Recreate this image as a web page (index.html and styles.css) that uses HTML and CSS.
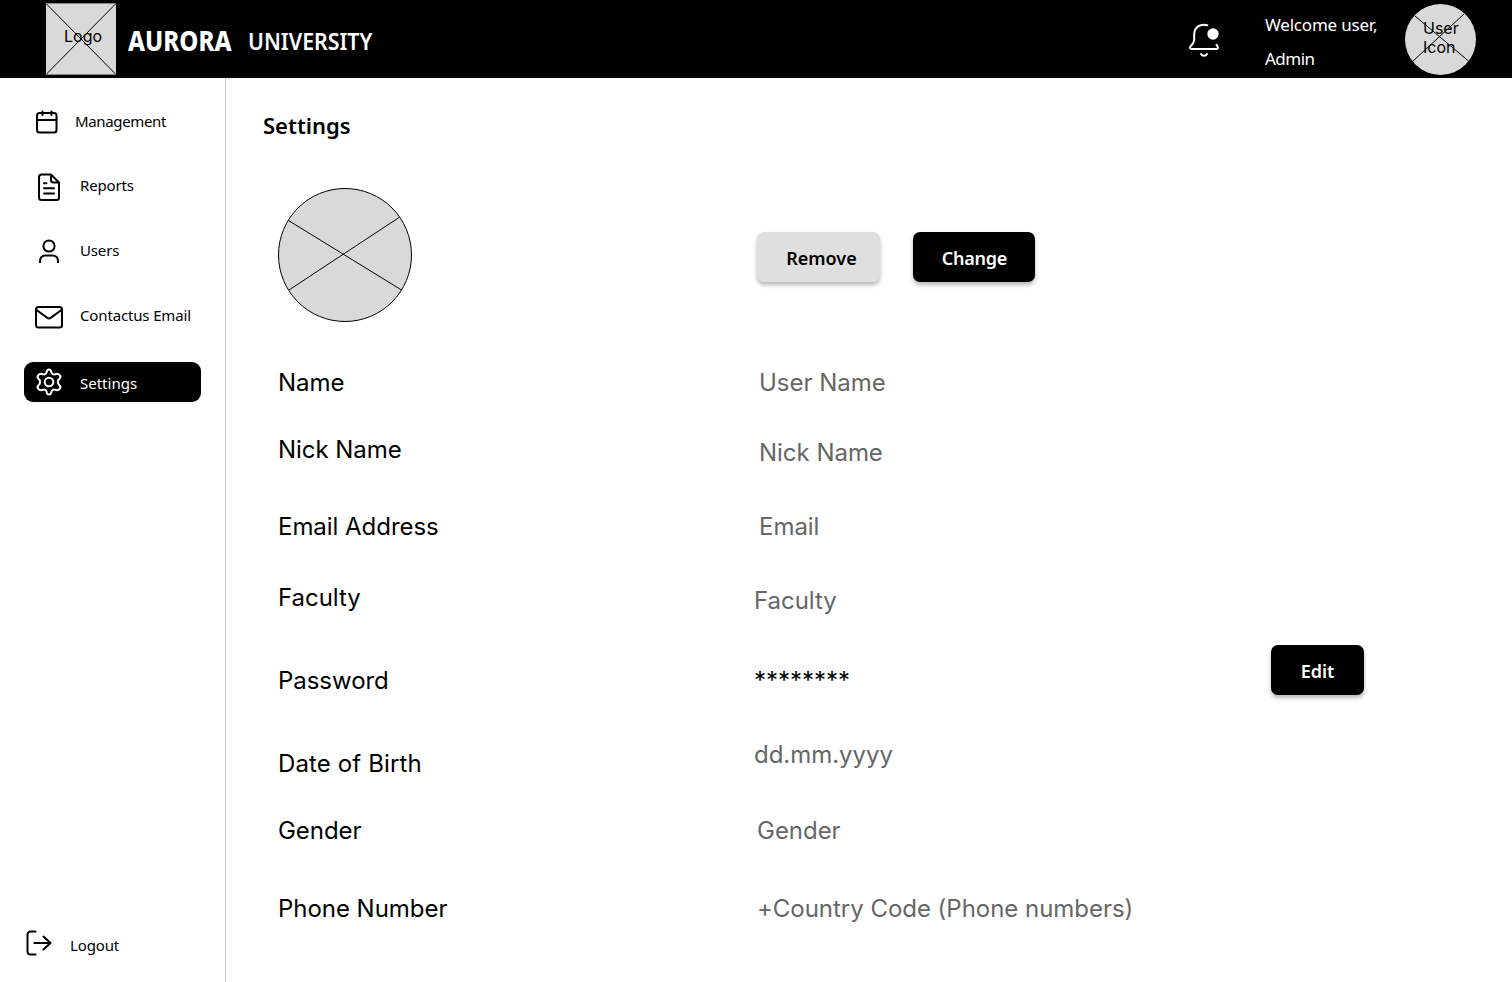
FILE: index.html
```html
<!DOCTYPE html>
<html lang="en">
<head>
<meta charset="utf-8">
<title>Aurora University – Settings</title>
<link rel="stylesheet" href="styles.css">
</head>
<body>
<header class="topbar">
  <div class="logo">
    <svg class="cross" viewBox="0 0 70 72"><rect width="70" height="72" fill="#d9d9d9" stroke="none"/><path d="M0 .5H70M0 71.500H70" stroke="#888"/><path d="M.5 1 69.500 71M69.500 1 .5 71"/></svg>
    <span class="logo-text">Logo</span>
  </div>
  <span class="brand-main">AURORA</span>
  <span class="brand-sub">UNIVERSITY</span>
  <svg class="bell" viewBox="0 0 32 34"><path d="M19.200 2.200C12 .2 6.500 4.500 6.200 11v5.200c0 1.800-.7 3.300-1.600 4.800l-2.300 2.700c-.7 1 .1 2.300 1.300 2.300h24.800c1.200 0 2-1.300 1.300-2.300l-1.200-1.900"/><path d="M13 31c.7 1.200 1.800 1.700 3 1.700s2.300-.5 3-1.700"/><circle cx="25" cy="11" r="5.700" fill="#fff" stroke="none"/></svg>
  <div class="welcome"><span>Welcome user,</span><span>Admin</span></div>
  <div class="avatar">
    <svg class="cross" viewBox="0 0 71 71"><circle cx="35.500" cy="35.500" r="35.500" fill="#d9d9d9" stroke="none"/><path d="M10 12 63.500 57M59 10 7.500 57.500"/></svg>
    <span class="avatar-text">User<br>Icon</span>
  </div>
</header>
<div class="body">
  <nav class="sidebar">
    <a class="item item-first"><svg class="icon" viewBox="0 0 28 28"><rect x="2" y="5" width="19.500" height="19.500" rx="2.500"/><path d="M2 12H21.500M7.500 3.500V7M16.500 3.500V7"/></svg><span>Management</span></a>
    <a class="item"><svg class="icon" viewBox="0 0 28 28"><path d="M16 1.500H6.500A2.500 2.500 0 0 0 4 4V24.500A2.500 2.500 0 0 0 6.500 27H21.500A2.500 2.500 0 0 0 24 24.500V9.500ZM16 1.500V7A2.500 2.500 0 0 0 18.500 9.500H24M9 10.300H11.500M9 15.300H19M9 20.500H19"/></svg><span>Reports</span></a>
    <a class="item"><svg class="icon icon-user" viewBox="0 0 28 28"><circle cx="14" cy="8" r="5.600"/><path d="M5 25v-2.300a5.200 5.200 0 0 1 5.200-5.200h7.600a5.200 5.200 0 0 1 5.200 5.200V25"/></svg><span>Users</span></a>
    <a class="item"><svg class="icon" viewBox="0 0 28 28"><rect x="1" y="4" width="26" height="20.500" rx="2.500"/><path d="M1.500 7 12.400 14.900Q14 16 15.600 14.900L26.500 7"/></svg><span>Contactus Email</span></a>
    <a class="item item-active"><svg class="icon" viewBox="0 0 28 28"><circle cx="14" cy="14" r="4.300"/><path d="M11.600 4.100C12.200.5 15.800.5 16.400 4.100C16.800 6.200 18.300 7 20.200 6.200C24 4.800 26.900 8.700 24.500 10.800C22.200 12.700 22.200 15.300 24.500 17.200C26.900 19.300 24 23.200 20.200 21.800C18.300 21 16.800 21.800 16.400 23.900C15.800 27.500 12.200 27.500 11.600 23.900C11.200 21.800 9.700 21 7.800 21.800C4 23.200 1.100 19.300 3.500 17.200C5.800 15.300 5.800 12.700 3.500 10.800C1.100 8.700 4 4.800 7.800 6.200C9.700 7 11.200 6.200 11.600 4.100Z"/></svg><span>Settings</span></a>
    <a class="item item-logout"><svg class="icon" viewBox="0 0 28 28"><path d="M10.500 2.500H5.500A3 3 0 0 0 2.500 5.500V22.500A3 3 0 0 0 5.500 25.500H10.500M9.500 14H25.500M18.500 7.500 25.500 14 18.500 20.500"/></svg><span>Logout</span></a>
  </nav>
  <main class="main">
    <h1 class="title">Settings</h1>
    <section class="photo-row">
      <svg class="photo" viewBox="0 0 134 134"><circle cx="67" cy="67" r="66.500" fill="#d9d9d9"/><path d="M10.500 32.500 123.500 102M121 29.500 11 102"/></svg>
      <button class="btn btn-light">Remove</button>
      <button class="btn btn-change">Change</button>
    </section>
    <dl class="fields">
      <div class="field"><dt>Name</dt><dd>User Name</dd></div>
      <div class="field field-nick"><dt>Nick Name</dt><dd>Nick Name</dd></div>
      <div class="field field-email"><dt>Email Address</dt><dd>Email</dd></div>
      <div class="field field-faculty"><dt>Faculty</dt><dd>Faculty</dd></div>
      <div class="field field-password"><dt>Password</dt><dd>********</dd><dd class="edit"><button class="btn">Edit</button></dd></div>
      <div class="field field-dob"><dt>Date of Birth</dt><dd>dd.mm.yyyy</dd></div>
      <div class="field field-gender"><dt>Gender</dt><dd>Gender</dd></div>
      <div class="field field-phone"><dt>Phone Number</dt><dd>+Country Code (Phone numbers)</dd></div>
    </dl>
  </main>
</div>
</body>
</html>
```
FILE: styles.css
```css
* { box-sizing: border-box; }
body {
  margin: 0;
  height: 982px;
  display: flex;
  flex-direction: column;
  overflow: hidden;
  background: #fff;
  color: #000;
  font-family: "Noto Sans", "Open Sans", sans-serif;
}
svg { display: block; flex: none; fill: none; stroke: #000; }

.topbar {
  height: 78px;
  flex: none;
  display: flex;
  padding: 3px 36px 0 46px;
  background: #000;
  color: #fff;
}
.logo { position: relative; width: 70px; height: 72px; color: #000; }
.cross { width: 100%; height: 100%; }
.logo-text, .avatar-text {
  position: absolute;
  left: 18px;
  top: 24px;
  font: 16px/19px Inter, sans-serif;
}
.brand-main, .brand-sub { transform-origin: left; white-space: nowrap; line-height: 40px; }
.brand-main { width: 120px; margin: 17px 0 0 12px; font-size: 28px; font-weight: 800; transform: scaleX(.86); }
.brand-sub { width: 130px; margin-top: 18px; font-size: 24px; font-weight: 600; transform: scaleX(.888); }
.bell { width: 32px; height: 34px; margin: 20px 45px 0 auto; stroke: #fff; stroke-width: 2; stroke-linecap: round; }
.welcome { display: flex; flex-direction: column; width: 140px; font-size: 17px; line-height: 34px; letter-spacing: -.2px; padding-top: 5px; }
.welcome span:last-child { letter-spacing: -.5px; }
.avatar { position: relative; width: 71px; height: 71px; margin-top: 1px; color: #000; }
.avatar-text { top: 15px; }

.body { flex: 1; display: flex; }
.sidebar {
  width: 226px;
  flex: none;
  display: flex;
  flex-direction: column;
  gap: 25px;
  padding: 24px 24px 19px;
  border-right: 1px solid #c8c8c8;
  font-size: 15px;
  line-height: 20px;
  letter-spacing: -.15px;
}
.item { display: flex; align-items: center; height: 40px; padding-left: 11px; gap: 17px; white-space: nowrap; }
.item span { padding-bottom: 4px; }
.item-first { gap: 12px; }
.item-first span { padding-bottom: 2px; letter-spacing: -.35px; }
.item-active { background: #000; color: #fff; border-radius: 9px; letter-spacing: 0; }
.item-active span { padding: 2px 0 0; }
.item-logout { margin-top: auto; padding-left: 1px; }
.item-logout span { padding: 4px 0 0; }
.icon { width: 28px; height: 28px; stroke-width: 2; stroke-linecap: round; stroke-linejoin: round; }
.icon-user { stroke-linecap: butt; }
.item-active .icon { stroke: #fff; }

.main { flex: 1; padding: 31px 0 0 52px; }
.title { margin: 0 0 0 -15px; font-size: 22px; line-height: 32px; font-weight: 600; }
.photo-row { display: flex; height: 134px; margin-top: 47px; }
.photo { width: 134px; height: 134px; margin-right: 345px; }
.btn {
  width: 93px;
  height: 50px;
  padding: 2px 0 0;
  border: 0;
  border-radius: 7px;
  background: #000;
  color: #fff;
  font: 600 18px/24px "Noto Sans", "Open Sans", sans-serif;
  box-shadow: 0 3px 4px rgba(0, 0, 0, .28);
}
.btn-light, .btn-change { margin-top: 44px; }
.btn-light { width: 123px; background: #dfdfdf; color: #000; padding-left: 6px; }
.btn-change { width: 122px; margin-left: 33px; padding-left: 1px; letter-spacing: -.25px; }

.fields { margin: 46px 0 0; font: 24px/29px Inter, sans-serif; }
.field { display: flex; height: 29px; }
.field dt { width: 481px; flex: none; letter-spacing: -.04px; }
.field dd { margin: 0; color: #666; letter-spacing: -.03px; }
.field-nick { margin-top: 38px; }
.field-nick dd { margin-top: 3px; }
.field-email { margin-top: 48px; }
.field-faculty { margin-top: 42px; }
.field-faculty dd { margin: 3px 0 0 -5px; }
.field-password { margin-top: 54px; }
.field-password dd { margin-left: -5px; color: #000; }
.field-password .edit { margin: -21px 148px 0 auto; line-height: 0; }
.field-dob { margin-top: 54px; }
.field-dob dt { letter-spacing: .12px; }
.field-dob dd { margin: -9px 0 0 -5px; }
.field-gender { margin-top: 38px; }
.field-gender dd, .field-phone dd { margin-left: -2px; }
.field-phone { margin-top: 49px; }
```
